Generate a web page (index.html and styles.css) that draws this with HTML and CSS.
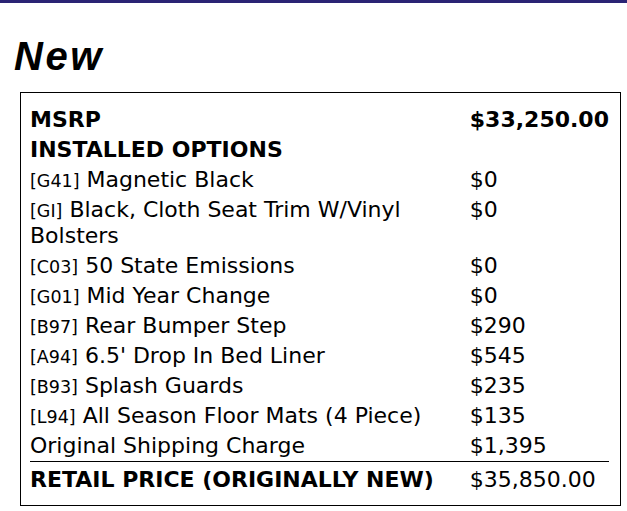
FILE: index.html
```html
<!DOCTYPE html>
<html>
<head>
<meta charset="utf-8">
<link rel="stylesheet" href="styles.css">
</head>
<body>
<div class="topbar"></div>
<h1 class="title">New</h1>
<div class="box">
<table class="price">
<tr class="bold"><td class="label">MSRP</td><td class="amt">$33,250.00</td></tr>
<tr class="bold"><td class="label">INSTALLED OPTIONS</td><td class="amt"></td></tr>
<tr><td class="label"><span class="code">[G41]</span> Magnetic Black</td><td class="amt">$0</td></tr>
<tr><td class="label"><span class="code">[GI]</span> Black, Cloth Seat Trim W/Vinyl Bolsters</td><td class="amt">$0</td></tr>
<tr><td class="label"><span class="code">[C03]</span> 50 State Emissions</td><td class="amt">$0</td></tr>
<tr><td class="label"><span class="code">[G01]</span> Mid Year Change</td><td class="amt">$0</td></tr>
<tr><td class="label"><span class="code">[B97]</span> Rear Bumper Step</td><td class="amt">$290</td></tr>
<tr><td class="label"><span class="code">[A94]</span> 6.5' Drop In Bed Liner</td><td class="amt">$545</td></tr>
<tr><td class="label"><span class="code">[B93]</span> Splash Guards</td><td class="amt">$235</td></tr>
<tr><td class="label"><span class="code">[L94]</span> All Season Floor Mats (4 Piece)</td><td class="amt">$135</td></tr>
<tr><td class="label">Original Shipping Charge</td><td class="amt">$1,395</td></tr>
<tr class="total"><td class="label">RETAIL PRICE (ORIGINALLY NEW)</td><td class="amt">$35,850.00</td></tr>
</table>
</div>
</body>
</html>
```
FILE: styles.css
```css
html, body { margin: 0; padding: 0; background: #fff; }
body { font-family: "DejaVu Sans", sans-serif; color: #000; }
.topbar { height: 3px; background: #2a2374; }
.title {
  font-family: "Liberation Sans", Arial, sans-serif;
  font-weight: bold; font-style: italic;
  font-size: 40px; line-height: 46px;
  margin: 30px 0 0 14px;
  letter-spacing: 2.5px;
}
.box {
  box-sizing: border-box;
  margin: 13px 0 0 20px;
  width: 601px;
  border: 1px solid #000;
  padding: 12px 11px 10px 9px;
}
.price { border-collapse: collapse; width: 100%; font-size: 22px; }
.price td { padding: 2px 0; line-height: 26px; vertical-align: top; }
.price td.amt { width: 138px; white-space: nowrap; }
.code { font-size: 17.5px; line-height: 1; }
.bold td { font-weight: bold; }
.total td { border-top: 1px solid #000; padding-top: 5px; }
.total td.label { font-weight: bold; }
```
